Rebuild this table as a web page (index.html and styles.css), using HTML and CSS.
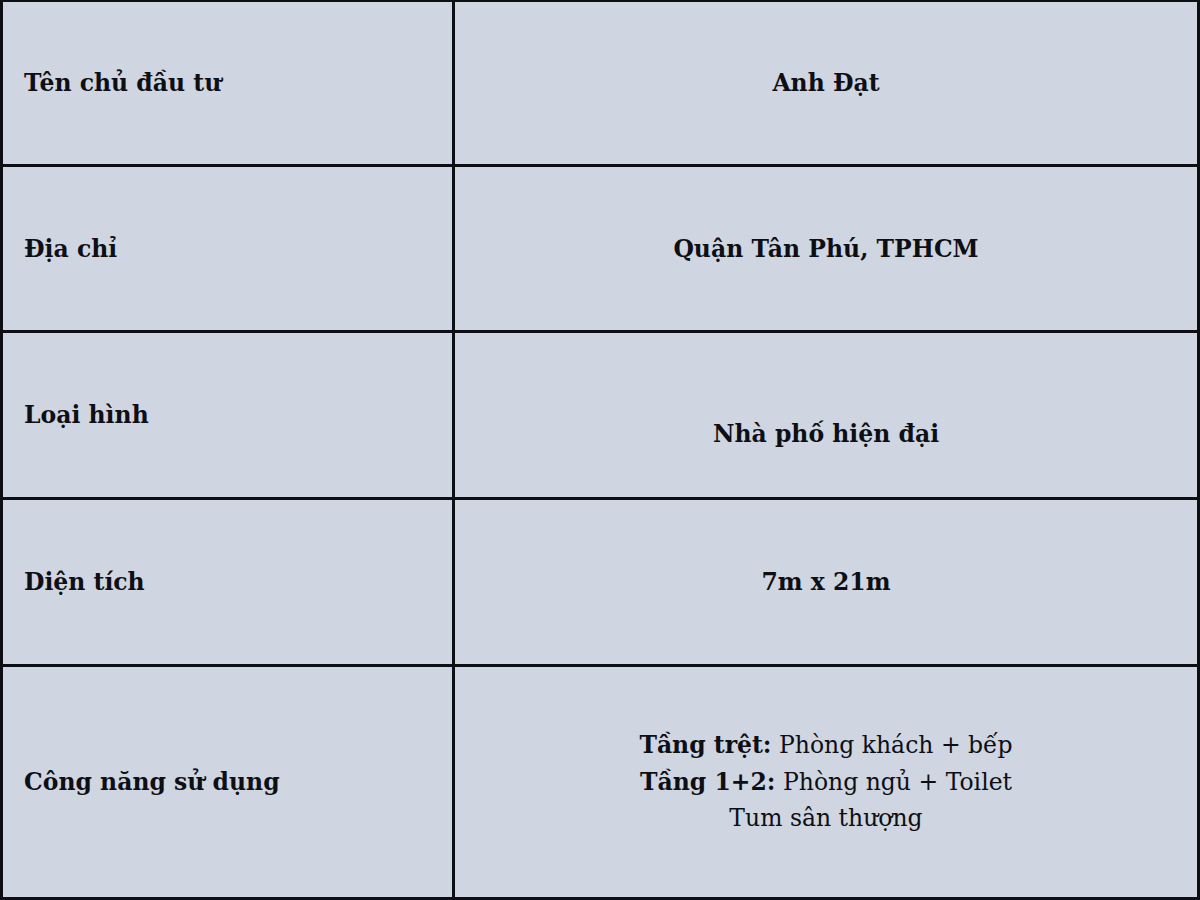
FILE: index.html
```html
<!DOCTYPE html>
<html lang="vi">
<head>
<meta charset="utf-8">
<link rel="stylesheet" href="styles.css">
</head>
<body>
<div class="table">
  <div class="cell label">Tên chủ đầu tư</div>
  <div class="cell value">Anh Đạt</div>
  <div class="cell label">Địa chỉ</div>
  <div class="cell value">Quận Tân Phú, TPHCM</div>
  <div class="cell label">Loại hình</div>
  <div class="cell value shifted">Nhà phố hiện đại</div>
  <div class="cell label">Diện tích</div>
  <div class="cell value">7m x 21m</div>
  <div class="cell label">Công năng sử dụng</div>
  <div class="cell value multi">
    <p><b>Tầng trệt:</b> Phòng khách + bếp</p>
    <p><b>Tầng 1+2:</b> Phòng ngủ + Toilet</p>
    <p>Tum sân thượng</p>
  </div>
</div>
</body>
</html>
```

FILE: styles.css
```css
html, body {
  margin: 0;
  padding: 0;
  background: #cfd6e1;
}
.table {
  width: 1200px;
  height: 900px;
  box-sizing: border-box;
  display: grid;
  grid-template-columns: 449px 742px;
  grid-template-rows: 162px 163px 164px 164px 230px;
  gap: 3px 3px;
  padding: 2px 3px 3px 3px;
  background: #0d0f14;
  font-family: "DejaVu Serif", "Liberation Serif", serif;
  color: #0d0f14;
}
.cell {
  background: #cfd6e1;
  display: flex;
  align-items: center;
  font-size: 23.5px;
  font-weight: bold;
}
.label {
  padding-left: 21px;
}
.value {
  justify-content: center;
  text-align: center;
}
.shifted {
  padding-top: 38px;
  box-sizing: border-box;
}
.multi {
  flex-direction: column;
  font-weight: normal;
  line-height: 36.5px;
}
.multi p {
  margin: 0;
}
.multi b {
  font-weight: bold;
}
```
